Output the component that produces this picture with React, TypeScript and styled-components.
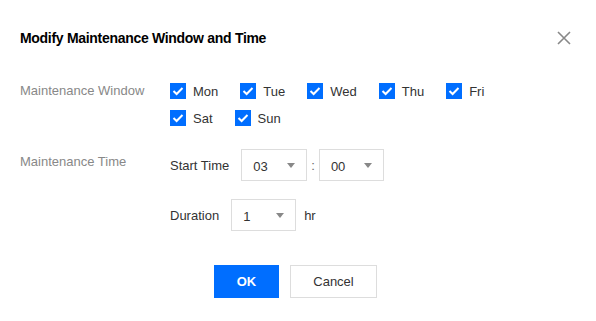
import React from "react";
import styled, { createGlobalStyle } from "styled-components";

const GlobalStyle = createGlobalStyle`
  html, body { margin: 0; padding: 0; background: #fff; }
  body { font-family: "Liberation Sans", Arial, sans-serif; color: #333; }
  * { box-sizing: border-box; }
`;

const Dialog = styled.div`
  width: 596px;
  height: 321px;
  padding: 28px 20px 0 20px;
  background: #fff;
`;

const Header = styled.div`
  display: flex;
  align-items: center;
  justify-content: space-between;
  height: 20px;
`;

const Title = styled.h2`
  margin: 0;
  font-size: 14px;
  font-weight: 700;
  line-height: 20px;
  letter-spacing: -0.3px;
  color: #000;
`;

const CloseButton = styled.button`
  width: 16px;
  height: 16px;
  padding: 0;
  margin-right: 4px;
  border: 0;
  background: transparent;
  display: flex;
  align-items: center;
  justify-content: center;
  cursor: pointer;
`;

const Form = styled.div`
  margin-top: 34px;
  display: flex;
  flex-direction: column;
`;

const FormRow = styled.div<{ $gap?: number }>`
  display: grid;
  grid-template-columns: 150px 1fr;
  margin-top: ${(p) => p.$gap ?? 0}px;
`;

const FieldLabel = styled.div<{ $pt?: number }>`
  font-size: 13px;
  line-height: 18px;
  color: #888;
  padding-top: ${(p) => p.$pt ?? 0}px;
`;

const CheckGroup = styled.div`
  display: flex;
  flex-wrap: wrap;
  row-gap: 9px;
  max-width: 340px;
`;

const CheckItem = styled.label`
  display: flex;
  align-items: center;
  height: 18px;
  margin-right: 22px;
  font-size: 13px;
  color: #333;
  cursor: pointer;
`;

const Box = styled.span`
  width: 16px;
  height: 16px;
  background: #006eff;
  display: flex;
  align-items: center;
  justify-content: center;
  margin-right: 7px;
`;

const TimeColumn = styled.div`
  display: flex;
  flex-direction: column;
  gap: 18px;
`;

const SubRow = styled.div`
  display: flex;
  align-items: center;
  height: 32px;
  font-size: 13px;
  color: #333;
`;

const SubLabel = styled.span`
  margin-right: 12px;
`;

const Select = styled.div<{ $w: number }>`
  width: ${(p) => p.$w}px;
  height: 32px;
  border: 1px solid #ddd;
  display: flex;
  align-items: center;
  justify-content: space-between;
  padding: 2px 11px 0 11px;
  font-size: 13px;
  color: #333;
`;

const Arrow = styled.span`
  width: 0;
  height: 0;
  border-left: 4px solid transparent;
  border-right: 4px solid transparent;
  border-top: 5px solid #888;
  margin-top: -1px;
`;

const Colon = styled.span`
  padding: 0 4px;
  color: #666;
`;

const Unit = styled.span`
  margin-left: 8px;
`;

const Footer = styled.div`
  display: flex;
  justify-content: center;
  gap: 11px;
  margin-top: 34px;
  padding-right: 5px;
`;

const Button = styled.button<{ $primary?: boolean }>`
  height: 33px;
  width: ${(p) => (p.$primary ? 65 : 87)}px;
  border: 1px solid ${(p) => (p.$primary ? "#006eff" : "#ddd")};
  background: ${(p) => (p.$primary ? "#006eff" : "#fff")};
  color: ${(p) => (p.$primary ? "#fff" : "#333")};
  font-family: "Liberation Sans", Arial, sans-serif;
  font-size: 13px;
  font-weight: ${(p) => (p.$primary ? 700 : 400)};
  padding: 0;
  cursor: pointer;
`;

const Check = () => (
  <svg width="12" height="10" viewBox="0 0 12 10">
    <path d="M1.5 5 L4.6 8 L10.5 2" fill="none" stroke="#fff" strokeWidth="2" />
  </svg>
);

const days = ["Mon", "Tue", "Wed", "Thu", "Fri", "Sat", "Sun"];

export default function App() {
  return (
    <>
      <GlobalStyle />
      <Dialog>
        <Header>
          <Title>Modify Maintenance Window and Time</Title>
          <CloseButton aria-label="close">
            <svg width="14" height="14" viewBox="0 0 14 14">
              <path d="M1 1 L13 13 M13 1 L1 13" stroke="#888" strokeWidth="1.6" fill="none" />
            </svg>
          </CloseButton>
        </Header>
        <Form>
          <FormRow>
            <FieldLabel>Maintenance Window</FieldLabel>
            <CheckGroup>
              {days.map((d) => (
                <CheckItem key={d}>
                  <Box>
                    <Check />
                  </Box>
                  {d}
                </CheckItem>
              ))}
            </CheckGroup>
          </FormRow>
          <FormRow $gap={22}>
            <FieldLabel $pt={4}>Maintenance Time</FieldLabel>
            <TimeColumn>
              <SubRow>
                <SubLabel>Start Time</SubLabel>
                <Select $w={66}>
                  03
                  <Arrow />
                </Select>
                <Colon>:</Colon>
                <Select $w={65}>
                  00
                  <Arrow />
                </Select>
              </SubRow>
              <SubRow>
                <SubLabel>Duration</SubLabel>
                <Select $w={65}>
                  1
                  <Arrow />
                </Select>
                <Unit>hr</Unit>
              </SubRow>
            </TimeColumn>
          </FormRow>
        </Form>
        <Footer>
          <Button $primary>OK</Button>
          <Button>Cancel</Button>
        </Footer>
      </Dialog>
    </>
  );
}
